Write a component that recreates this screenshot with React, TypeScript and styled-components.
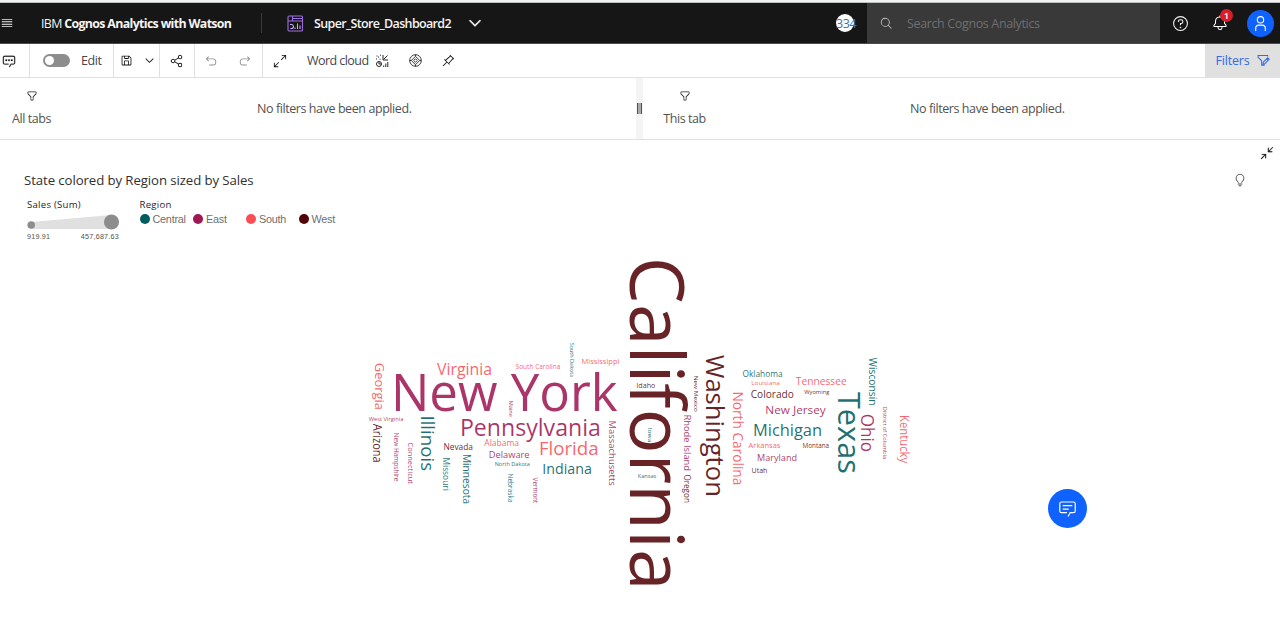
import React from "react";
import styled, { createGlobalStyle } from "styled-components";

const GlobalStyle = createGlobalStyle`
  * { box-sizing: border-box; }
  html, body { margin: 0; background: #fff; overflow: hidden; }
  body { font-family: "Open Sans", "Noto Sans", sans-serif; font-size: 12.5px; color: #464646; letter-spacing: -0.42px; }
  button { font: inherit; color: inherit; letter-spacing: inherit; border: 0; padding: 0; background: none; }
  svg { flex: none; }
`;

const Page = styled.div`
  display: flex;
  flex-direction: column;
  width: 1280px;
  height: 628px;
  background: #fff;
`;

const WindowEdge = styled.div`
  flex: none;
  height: 3px;
  background: linear-gradient(#f1f3f2 2px, #8a8a8a);
`;

const Header = styled.header`
  flex: none;
  display: flex;
  align-items: center;
  height: 41px;
  background: #161616;
  border-bottom: 1px solid #4a4a4a;
  color: #f4f4f4;
`;

const MenuButton = styled.button`
  display: flex;
  width: 41px;
  padding-left: 1px;
  color: #f4f4f4;
`;

const Brand = styled.div`
  width: 220px;
  font-size: 12.4px;
  letter-spacing: -0.66px;
  white-space: nowrap;
  strong { font-weight: 700; }
`;

const HeaderRule = styled.div`
  width: 1px;
  height: 20px;
  background: #393939;
`;

const DocumentTitle = styled.div`
  display: flex;
  align-items: center;
  padding-left: 25px;
  font-size: 12.5px;
  font-weight: 600;
  white-space: nowrap;
`;

const DocumentName = styled.span`
  width: 138px;
  margin: 0 14px 0 10px;
  letter-spacing: -0.65px;
`;

const Spacer = styled.div`
  flex: 1;
`;

const CountBadge = styled.div`
  display: flex;
  align-items: center;
  width: 18px;
  height: 18px;
  margin-right: 13px;
  border-radius: 50%;
  background: #fff;
  color: #3a70b4;
  letter-spacing: -0.4px;
`;

const Search = styled.div`
  display: flex;
  align-items: center;
  align-self: stretch;
  gap: 14px;
  width: 293px;
  padding-left: 13px;
  background: #393939;
  color: #c6c6c6;
`;

const Placeholder = styled.span`
  color: #6f6f6f;
  letter-spacing: -0.36px;
  padding-top: 1px;
`;

const HeaderActions = styled.div`
  display: flex;
  align-items: center;
  width: 120px;
  padding-left: 12px;
`;

const BellButton = styled.button`
  position: relative;
  display: flex;
  margin-left: 23px;
  color: #fff;
`;

const AlertBadge = styled.span`
  position: absolute;
  top: -6px;
  right: -5px;
  width: 13px;
  height: 13px;
  border-radius: 50%;
  background: #da1e28;
  font-size: 9.5px;
  font-weight: 600;
  letter-spacing: 0;
  line-height: 13px;
  text-align: center;
`;

const Avatar = styled.button`
  display: flex;
  align-items: center;
  justify-content: center;
  width: 27px;
  height: 27px;
  margin-left: 19px;
  border-radius: 50%;
  background: #0f62fe;
  color: #fff;
`;

const Toolbar = styled.div`
  flex: none;
  display: flex;
  height: 34px;
  border-bottom: 1px solid #e0e0e0;
`;

const ToolGroup = styled.div<{ $width?: number; $pad?: number; $gap?: number; $last?: boolean }>`
  display: flex;
  align-items: center;
  width: ${(p) => (p.$width ? `${p.$width}px` : "auto")};
  padding-left: ${(p) => p.$pad ?? 0}px;
  gap: ${(p) => p.$gap ?? 0}px;
  border-right: ${(p) => (p.$last ? "0" : "1px solid #e0e0e0")};
  white-space: nowrap;
`;

const ToolLabel = styled.span<{ $width: number; $spacing: number }>`
  width: ${(p) => p.$width}px;
  letter-spacing: ${(p) => p.$spacing}px;
`;

const Toggle = styled.span`
  width: 27px;
  height: 13px;
  padding: 2px;
  border-radius: 7px;
  background: #8d8d8d;
  &::before {
    content: "";
    display: block;
    width: 9px;
    height: 9px;
    border-radius: 50%;
    background: #fff;
  }
`;

const FiltersButton = styled.button`
  display: flex;
  align-items: center;
  gap: 7px;
  width: 75px;
  height: 33px;
  padding-left: 10px;
  background: #e0e0e0;
  color: #2f6bea;
`;

const FilterBar = styled.div`
  flex: none;
  display: flex;
  height: 62px;
  border-bottom: 1px solid #e0e0e0;
`;

const FilterPane = styled.section<{ $width: number; $pad: number }>`
  display: flex;
  width: ${(p) => p.$width}px;
  padding-left: ${(p) => p.$pad}px;
  color: #525252;
`;

const FilterScope = styled.div`
  display: flex;
  flex-direction: column;
  align-items: center;
  width: 43px;
  padding-top: 12px;
  line-height: 18px;
  white-space: nowrap;
  svg { margin-bottom: 8px; color: #262626; }
`;

const FilterMessage = styled.div`
  width: 560px;
  padding: 22px 0 0 204px;
  line-height: 18px;
`;

const Splitter = styled.div`
  display: flex;
  align-items: center;
  justify-content: center;
  width: 7px;
  background: #f4f4f4;
  &::before {
    content: "";
    width: 3px;
    height: 11px;
    border: solid #525252;
    border-width: 0 1px;
    background: #a8a8a8;
  }
`;

const Canvas = styled.main`
  position: relative;
  flex: 1;
  display: flex;
  flex-direction: column;
`;

const CanvasTools = styled.div`
  display: flex;
  justify-content: flex-end;
  height: 31px;
  padding: 6px 6px 0 0;
  color: #161616;
`;

const TitleRow = styled.div`
  display: flex;
  justify-content: space-between;
  padding: 0 33px 0 24px;
  height: 27px;
  svg { margin-top: 2px; }
`;

const ChartTitle = styled.h1`
  margin: 0;
  font-size: 13.2px;
  font-weight: 400;
  line-height: 18px;
  color: #303030;
  letter-spacing: -0.08px;
`;

const Legends = styled.div`
  display: flex;
  height: 48px;
  padding-left: 27px;
  color: #262626;
  font-size: 9.6px;
`;

const LegendBlock = styled.div<{ $width: number }>`
  width: ${(p) => p.$width}px;
`;

const LegendHeading = styled.div`
  height: 14px;
  line-height: 13px;
  letter-spacing: 0.25px;
`;

const SizeRange = styled.div`
  display: flex;
  justify-content: space-between;
  width: 92px;
  padding-top: 2px;
  font: 7.2px/8px "Liberation Sans", sans-serif;
  color: #525252;
  letter-spacing: 0.22px;
`;

const RegionList = styled.div`
  display: grid;
  grid-template-columns: 53.5px 53px 52.5px 50px;
  font-family: "Liberation Sans", sans-serif;
  font-size: 10.8px;
  line-height: 14px;
  color: #6f6f6f;
  letter-spacing: -0.22px;
`;

const RegionItem = styled.div<{ $color: string }>`
  display: flex;
  align-items: center;
  gap: 3px;
  &::before {
    content: "";
    width: 10px;
    height: 10px;
    border-radius: 50%;
    background: ${(p) => p.$color};
  }
`;

const CloudChart = styled.svg`
  display: block;
  margin-left: 360px;
  letter-spacing: 0;
`;

const ChatButton = styled.button`
  position: absolute;
  right: 193px;
  bottom: 100px;
  display: flex;
  align-items: center;
  justify-content: center;
  width: 39px;
  height: 39px;
  border-radius: 50%;
  background: #0f62fe;
  color: #fff;
`;

const icons = {
  menu: "M2 5h28v2.4H2ZM2 11.500h28v2.400H2ZM2 18h28v2.400H2ZM2 24.500h28v2.400H2Z",
  filter:
    "M18,28H14a2,2,0,0,1-2-2V18.41L4.59,11A2,2,0,0,1,4,9.59V6A2,2,0,0,1,6,4H26a2,2,0,0,1,2,2V9.59A2,2,0,0,1,27.41,11L20,18.41V26A2,2,0,0,1,18,28ZM6,6V9.59l8,8V26h4V17.59l8-8V6Z",
  save: "M27.71,9.29l-5-5A1,1,0,0,0,22,4H6A2,2,0,0,0,4,6V26a2,2,0,0,0,2,2H26a2,2,0,0,0,2-2V10A1,1,0,0,0,27.71,9.29ZM12,6h8v4H12Zm8,20H12V18h8Zm2,0V18a2,2,0,0,0-2-2H12a2,2,0,0,0-2,2v8H6V6h4v4a2,2,0,0,0,2,2h8a2,2,0,0,0,2-2V6.41l4,4V26Z",
  share:
    "M23,20a5,5,0,0,0-3.89,1.89L11.8,17.32a4.46,4.46,0,0,0,0-2.64l7.31-4.57A5,5,0,1,0,18,7a4.79,4.79,0,0,0,.2,1.32l-7.31,4.57a5,5,0,1,0,0,6.22l7.31,4.57A4.79,4.79,0,0,0,18,25a5,5,0,1,0,5-5ZM23,4a3,3,0,1,1-3,3A3,3,0,0,1,23,4ZM7,19a3,3,0,1,1,3-3A3,3,0,0,1,7,19Zm16,9a3,3,0,1,1,3-3A3,3,0,0,1,23,28Z",
  undo: "M20,10H7.8149l3.5874-3.5859L10,5,4,11,10,17l1.4023-1.4146L7.8179,12H20a6,6,0,0,1,0,12H12v2h8a8,8,0,0,0,0-16Z",
  redo: "M12,10H24.1851L20.5977,6.4141,22,5,28,11,22,17l-1.4023-1.4146L24.1821,12H12a6,6,0,0,0,0,12h8v2H12a8,8,0,0,1,0-16Z",
  search:
    "M29,27.5859l-7.5521-7.5521a11.0177,11.0177,0,1,0-1.4141,1.4141L27.5859,29ZM4,13a9,9,0,1,1,9,9A9.01,9.01,0,0,1,4,13Z",
  help: "M16,2A14,14,0,1,0,30,16,14,14,0,0,0,16,2Zm0,26A12,12,0,1,1,28,16,12,12,0,0,1,16,28ZM14.5,23.5a1.500,1.500,0,1,0,3,0a1.500,1.500,0,1,0,-3,0ZM17,8H15.5A4.49,4.49,0,0,0,11,12.5V13h2v-.5A2.5,2.5,0,0,1,15.5,10H17a2.5,2.5,0,0,1,0,5H15v4.5h2V17a4.5,4.5,0,0,0,0-9Z",
  bell: "M28.7071,19.293,26,16.5859V13a10.0136,10.0136,0,0,0-9-9.9492V1H15V3.0508A10.0136,10.0136,0,0,0,6,13v3.5859L3.2929,19.293A1,1,0,0,0,3,20v3a1,1,0,0,0,1,1h7v.7768a5.152,5.152,0,0,0,4.5,5.1987A5.0057,5.0057,0,0,0,21,25V24h7a1,1,0,0,0,1-1V20A1,1,0,0,0,28.7071,19.293ZM19,25a3,3,0,0,1-6,0V24h6Zm8-3H5V20.4141L7.707,17.707A1,1,0,0,0,8,17V13a8,8,0,0,1,16,0v4a1,1,0,0,0,.293.707L27,20.4141Z",
  user: "M16,4a5,5,0,1,1-5,5,5,5,0,0,1,5-5m0-2a7,7,0,1,0,7,7A7,7,0,0,0,16,2ZM26,30H24V25a5,5,0,0,0-5-5H13a5,5,0,0,0-5,5v5H6V25a7,7,0,0,1,7-7h6a7,7,0,0,1,7,7Z",
  chevron: "M16,22L6,12l1.4-1.4,8.6,8.6,8.6-8.6L26,12Z",
  idea: "M11,24H21v2H11Zm2,4h6v2H13ZM16,2A10,10,0,0,0,6,12a9.19,9.19,0,0,0,3.46,7.62c1,.93,1.54,1.46,1.54,2.38h2c0-1.84-1.11-2.87-2.19-3.86A7.2,7.2,0,0,1,8,12a8,8,0,0,1,16,0,7.2,7.2,0,0,1-2.82,6.14c-1.07,1-2.18,2-2.18,3.86h2c0-.92.53-1.45,1.54-2.39A9.18,9.18,0,0,0,26,12,10,10,0,0,0,16,2Z",
  chat: "M17.74,30,16,29l4-7h6a2,2,0,0,0,2-2V8a2,2,0,0,0-2-2H6A2,2,0,0,0,4,8V20a2,2,0,0,0,2,2h9v2H6a4,4,0,0,1-4-4V8A4,4,0,0,1,6,4H26a4,4,0,0,1,4,4V20a4,4,0,0,1-4,4H21.16ZM8,10H24v2H8ZM8,16H18v2H8Z",
  comment:
    "M17.74,30,16,29l4-7h6a2,2,0,0,0,2-2V8a2,2,0,0,0-2-2H6A2,2,0,0,0,4,8V20a2,2,0,0,0,2,2h9v2H6a4,4,0,0,1-4-4V8A4,4,0,0,1,6,4H26a4,4,0,0,1,4,4V20a4,4,0,0,1-4,4H21.16ZM8,12.500h3.500v3.500H8ZM14.250,12.500h3.500v3.500H14.250ZM20.500,12.500h3.500v3.500H20.500Z",
  minimize:
    "M4,18v2h6.586L2,28.582,3.414,30,12,21.414V28h2V18ZM30,3.416,28.592,2,20,10.586V4H18V14H28V12H21.414Z",
  maximize:
    "M20,2V4h6.586L18,12.582,19.414,14,28,5.414V12h2V2ZM14,19.416,12.592,18,4,26.586V20H2V30H12V28H5.414Z",
  pin: "M28.5858,13.3137,30,11.9,20,2,18.6858,3.415l1.1858,1.1857L8.38,14.3225,6.6641,12.6067,5.25,14l5.6572,5.6773L2,28.5831,3.41,30l8.9111-8.9087L18,26.7482l1.3929-1.414L17.6765,23.618l9.724-11.4895ZM16.2559,22.1973,9.8,15.7422,21.2925,6.0212l4.6854,4.6854Z",
};

function Icon({ name, size = 14, color, bold }: { name: keyof typeof icons; size?: number; color?: string; bold?: number }) {
  return (
    <svg width={size} height={size} viewBox="0 0 32 32" fill={color ?? "currentColor"} stroke={color ?? "currentColor"} strokeWidth={bold ?? 0}>
      <path d={icons[name]} />
    </svg>
  );
}

const DashboardIcon = () => (
  <svg width="17" height="17" viewBox="0 0 17 17" fill="none" stroke="#9c70dc" strokeWidth="1.1">
    <rect x="1" y="1" width="14.500" height="15" rx="1" />
    <path d="M1 6h14.500M5.500 1v5M5.500 3.500h10" />
    <path d="M10.500 14V8.500M13 14v-3.500M8 14v-1.500M3 9.500h2a2 2 0 0 1 1.500 2a2 2 0 0 1-2 2H3.300" stroke="#c9a6f5" />
  </svg>
);

const ChartTypeIcon = () => (
  <svg width="14" height="14" viewBox="0 0 14 14" fill="none" stroke="#262626" strokeWidth="1">
    <circle cx="4" cy="10" r="2.500" />
    <path d="M4 7.500V10h2.500M8.700 13v-1.500M10.800 13V9.500M12.800 13V8M8 1v5h5M8.500 5.500l4-4" />
    <path d="M1 5h1M3 3h1M4.500 5.200h1M5 1.200h1M1.500 2h1" />
  </svg>
);

const WheelIcon = () => (
  <svg width="13" height="13" viewBox="0 0 13 13" fill="none" stroke="#262626" strokeWidth="0.9">
    <circle cx="6.500" cy="6.500" r="5.800" />
    <path d="M6.500 2.300 10.700 6.500 6.500 10.700 2.300 6.500Z" />
    <path d="M6.500 4.700 8.300 6.500 6.500 8.300 4.700 6.500Z" />
    <path d="M6.500.7v1.600M6.500 10.700v1.600M.7 6.500h1.600M10.700 6.500h1.600" />
  </svg>
);

const FilterEditIcon = () => (
  <svg width="13" height="13" viewBox="0 0 14 14" fill="none" stroke="currentColor" strokeWidth="1.1">
    <path d="M11.500 2.800V1.500H1.200v2L5 7.300v4.900h2.800V11M6.800 8.800l4.700-4.700 1.600 1.600-4.700 4.700-2 .4ZM10.300 5.300l1.600 1.600" />
  </svg>
);

const SizeLegend = () => (
  <svg width="93" height="19" viewBox="0 0 93 19" display="block">
    <path d="M4 10 84 3v14H4Z" fill="#e0e0e0" />
    <circle cx="4.200" cy="13" r="3.800" fill="#8d8d8d" />
    <circle cx="84.500" cy="10" r="7.600" fill="#8d8d8d" />
  </svg>
);

const regionColors = { Central: "#005d5d", East: "#9f1853", South: "#fa4d56", West: "#520408" };
type Region = keyof typeof regionColors;

// Each word: label, region, start and end along its direction, baseline, font size.
type Word = [string, Region, number, number, number, number];

const horizontalWords: Word[] = [
  ["New York", "East", 394, 614.5, 411, 51],
  ["Pennsylvania", "East", 461.3, 599.5, 435.7, 23],
  ["Virginia", "South", 438, 491, 375, 17],
  ["Florida", "South", 540, 597.5, 454.7, 18.6],
  ["Indiana", "Central", 543.2, 591, 474, 13.8],
  ["Michigan", "Central", 754, 821, 435.7, 16.8],
  ["New Jersey", "East", 766, 825, 414, 11],
  ["Tennessee", "South", 796.5, 846, 384.7, 10.8],
  ["Colorado", "West", 751.3, 793.3, 398, 10],
  ["Maryland", "East", 757.5, 796.5, 461, 9.5],
  ["Delaware", "East", 489.3, 529, 457.7, 9.5],
  ["Oklahoma", "Central", 743, 782, 376.7, 9.3],
  ["Nevada", "West", 444, 472.5, 450, 8.5],
  ["Alabama", "South", 484.8, 518.5, 445.7, 8.3],
  ["Mississippi", "South", 582, 619, 364.3, 7.5],
  ["Utah", "West", 752, 767, 472.7, 7.5],
  ["Arkansas", "South", 749, 780, 448, 7.2],
  ["South Carolina", "South", 516, 560, 369, 6.8],
  ["Montana", "West", 803, 828.7, 447.7, 6.6],
  ["Idaho", "West", 636.7, 655, 387.7, 6.2],
  ["Louisiana", "South", 751.5, 779.5, 385, 6],
  ["West Virginia", "East", 369, 403, 420.8, 6],
  ["North Dakota", "Central", 495, 529.5, 466, 5.8],
  ["Wyoming", "West", 804.5, 829, 394, 5.6],
  ["Kansas", "Central", 638, 656, 477.7, 5.3],
];

const verticalWords: Word[] = [
  ["California", "West", 261.3, 586, 630.3, 75.2],
  ["Texas", "Central", 393.8, 472, 837.7, 31],
  ["Washington", "West", 356.3, 495.3, 706, 26.3],
  ["Illinois", "Central", 416.5, 470, 421, 17.7],
  ["Ohio", "East", 414.7, 451, 860.7, 17.7],
  ["North Carolina", "South", 392.3, 484.5, 732.7, 13.8],
  ["Georgia", "South", 363.6, 409, 374.7, 13],
  ["Kentucky", "South", 415.7, 462.5, 900, 12],
  ["Arizona", "West", 424.4, 462, 373.3, 11.7],
  ["Minnesota", "Central", 454.5, 503.5, 462.5, 10.3],
  ["Wisconsin", "Central", 358, 405, 869, 10.3],
  ["Rhode Island", "East", 415, 470.5, 684, 9.8],
  ["Oregon", "West", 475, 502.3, 684, 9.4],
  ["Massachusetts", "East", 421, 485.3, 609, 9.5],
  ["Missouri", "Central", 458, 490.3, 442.7, 8.2],
  ["Connecticut", "East", 443, 483.5, 407.5, 7.2],
  ["New Hampshire", "East", 433, 481, 394, 7],
  ["Nebraska", "Central", 474, 502, 508, 6.7],
  ["Vermont", "East", 478, 503, 533.3, 6.3],
  ["South Dakota", "Central", 343, 377, 570, 6],
  ["District of Columbia", "East", 407, 458.7, 883, 6],
  ["New Mexico", "West", 376, 411.5, 694, 5.8],
  ["Iowa", "Central", 428, 442, 648, 5.8],
  ["Maine", "East", 401, 416.5, 509, 5.5],
];

function CloudWord({ word, vertical }: { word: Word; vertical?: boolean }) {
  const [label, region, start, end, baseline, size] = word;
  const bearing = size * 0.06;
  const x = vertical ? baseline : start - bearing;
  const y = vertical ? start - bearing : baseline;
  return (
    <text
      transform={`translate(${x} ${y})${vertical ? " rotate(90)" : ""}`}
      fontSize={size}
      fill={regionColors[region]}
      fillOpacity={0.88}
      textLength={end - start + bearing * 2}
      lengthAdjust="spacingAndGlyphs"
    >
      {label}
    </text>
  );
}

export default function App() {
  return (
    <Page>
      <GlobalStyle />
      <WindowEdge />
      <Header>
        <MenuButton><Icon name="menu" size={12} /></MenuButton>
        <Brand>IBM <strong>Cognos Analytics with Watson</strong></Brand>
        <HeaderRule />
        <DocumentTitle>
          <DashboardIcon />
          <DocumentName>Super_Store_Dashboard2</DocumentName>
          <Icon name="chevron" size={18} bold={1.2} />
        </DocumentTitle>
        <Spacer />
        <CountBadge>334</CountBadge>
        <Search>
          <Icon name="search" size={13} />
          <Placeholder>Search Cognos Analytics</Placeholder>
        </Search>
        <HeaderActions>
          <Icon name="help" size={17} />
          <BellButton>
            <Icon name="bell" size={16} />
            <AlertBadge>1</AlertBadge>
          </BellButton>
          <Avatar><Icon name="user" size={17} /></Avatar>
        </HeaderActions>
      </Header>
      <Toolbar>
        <ToolGroup $width={30} $pad={2}><Icon name="comment" color="#161616" bold={0.5} /></ToolGroup>
        <ToolGroup $width={84} $pad={13} $gap={11}><Toggle /><ToolLabel $width={22} $spacing={-0.4}>Edit</ToolLabel></ToolGroup>
        <ToolGroup $width={46} $pad={6} $gap={10}>
          <Icon name="save" size={13} color="#161616" />
          <Icon name="chevron" size={13} color="#161616" />
        </ToolGroup>
        <ToolGroup $width={35} $pad={10}><Icon name="share" size={14} color="#161616" /></ToolGroup>
        <ToolGroup $width={68} $pad={9} $gap={20}>
          <Icon name="undo" color="#8d8d8d" />
          <Icon name="redo" color="#8d8d8d" />
        </ToolGroup>
        <ToolGroup $last $pad={10} $gap={20}>
          <Icon name="maximize" color="#161616" />
          <ToolGroup $last $gap={7}><ToolLabel $width={61} $spacing={-0.55}>Word cloud</ToolLabel><ChartTypeIcon /></ToolGroup>
          <WheelIcon />
          <Icon name="pin" size={13} color="#161616" />
        </ToolGroup>
        <Spacer />
        <FiltersButton><ToolLabel $width={35} $spacing={-0.2}>Filters</ToolLabel><FilterEditIcon /></FiltersButton>
      </Toolbar>
      <FilterBar>
        <FilterPane $width={636} $pad={10}>
          <FilterScope><Icon name="filter" size={12} />All tabs</FilterScope>
          <FilterMessage>No filters have been applied.</FilterMessage>
        </FilterPane>
        <Splitter />
        <FilterPane $width={637} $pad={20}>
          <FilterScope><Icon name="filter" size={12} />This tab</FilterScope>
          <FilterMessage>No filters have been applied.</FilterMessage>
        </FilterPane>
      </FilterBar>
      <Canvas>
        <CanvasTools><Icon name="minimize" bold={0.3} /></CanvasTools>
        <TitleRow>
          <ChartTitle>State colored by Region sized by Sales</ChartTitle>
          <Icon name="idea" size={14} />
        </TitleRow>
        <Legends>
          <LegendBlock $width={112.5}>
            <LegendHeading>Sales (Sum)</LegendHeading>
            <SizeLegend />
            <SizeRange><span>919.91</span><span>457,687.63</span></SizeRange>
          </LegendBlock>
          <LegendBlock $width={215}>
            <LegendHeading>Region</LegendHeading>
            <RegionList>
              {(Object.keys(regionColors) as Region[]).map((name) => (
                <RegionItem key={name} $color={regionColors[name]}>{name}</RegionItem>
              ))}
            </RegionList>
          </LegendBlock>
        </Legends>
        <CloudChart width="560" height="350" viewBox="360 246 560 350">
          {horizontalWords.map((w) => <CloudWord key={w[0]} word={w} />)}
          {verticalWords.map((w) => <CloudWord key={w[0]} word={w} vertical />)}
        </CloudChart>
        <ChatButton><Icon name="chat" size={19} /></ChatButton>
      </Canvas>
    </Page>
  );
}
